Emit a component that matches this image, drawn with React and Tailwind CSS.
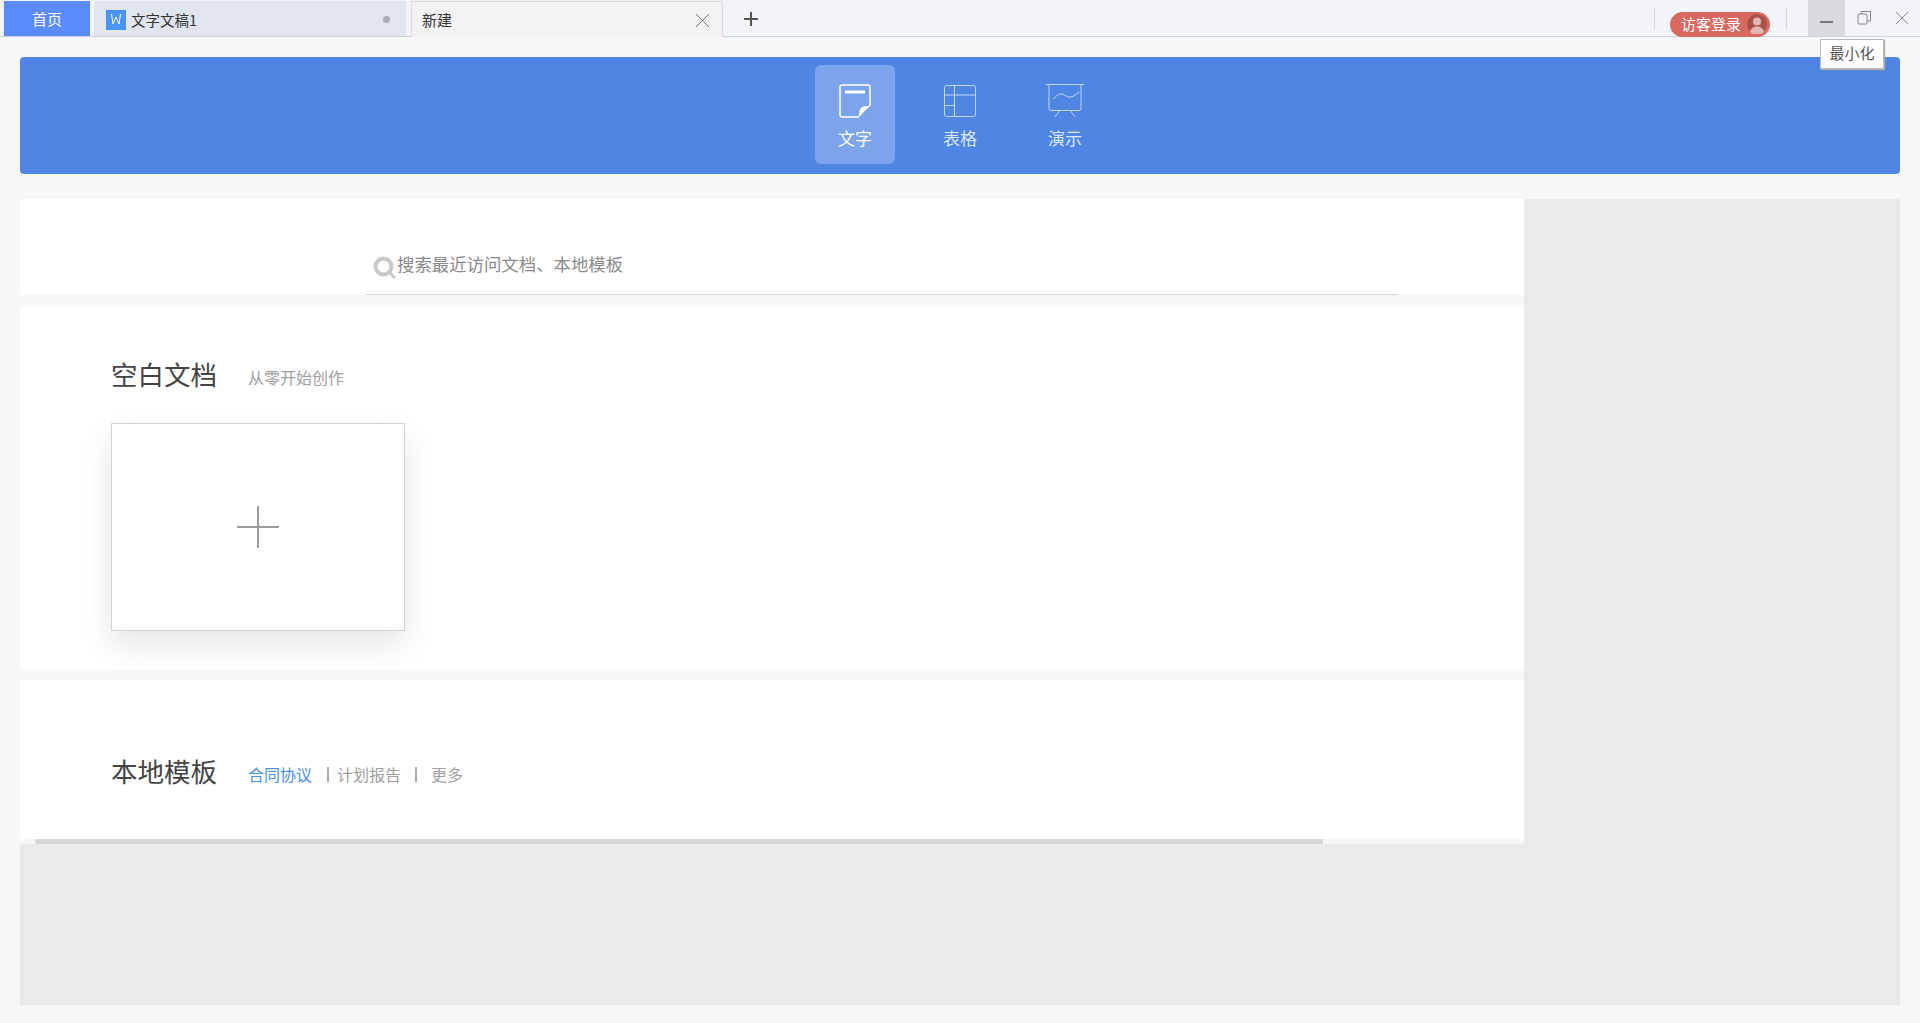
import React from 'react';

const FONT = { fontFamily: '"Noto Sans CJK SC", "Noto Sans", sans-serif' };

const DocIcon = () => (
  <svg width="32" height="34" viewBox="0 0 32 34" fill="none" stroke="#fff" strokeWidth="1.5">
    <path d="M20 33H3a2 2 0 0 1-2-2V3a2 2 0 0 1 2-2h26a2 2 0 0 1 2 2v19" />
    <path d="M6 8h20" strokeWidth="3" />
    <path d="M31 22 20 33c0-4 0-7 2-9s5-2 9-2z" fill="#fff" stroke="none" />
    <path d="M24 30l4-4" stroke="#7ba2ea" />
  </svg>
);

const TableIcon = () => (
  <svg width="34" height="34" viewBox="0 0 34 34" fill="none" stroke="#c4d6f5" strokeWidth="1">
    <rect x="1.5" y="1.5" width="31" height="31" rx="2" />
    <path d="M1.5 11h31M1.500 21.500h10M11.500 1.500v31" />
  </svg>
);

const SlideIcon = () => (
  <svg width="40" height="36" viewBox="0 0 40 36" fill="none" stroke="#c4d6f5" strokeWidth="1">
    <path d="M1 1.500h38M4 1.500v24a2 2 0 0 0 2 2h28a2 2 0 0 0 2-2v-24" />
    <path d="M8 16c3-2 5-6 9-5s5 4 9 3 5-3 8-5" />
    <path d="M14 28c-1 3-3 4-4 6M26 28c1 3 3 4 4 6" />
  </svg>
);

const SearchIcon = () => (
  <svg width="24" height="24" viewBox="0 0 24 24" fill="none" stroke="#c8c8c8">
    <circle cx="10.500" cy="10.500" r="8" strokeWidth="4" />
    <path d="M16 16l6 6" strokeWidth="3" />
  </svg>
);

const WordIcon = () => (
  <div className="flex h-5 w-5 items-center justify-center bg-[#4a94f2]">
    <svg width="12" height="11" viewBox="0 0 12 11" fill="none" stroke="#fff" strokeWidth="1">
      <path d="M1.500 0l1.500 10 3-7 3 7 1.500-10" />
    </svg>
  </div>
);

const Avatar = () => (
  <svg width="20" height="20" viewBox="0 0 20 20">
    <circle cx="10" cy="10" r="10" fill="#a8524a" />
    <circle cx="10" cy="7.500" r="4" fill="#e2b8b2" />
    <path d="M3 18c1-4 4-5.500 7-5.500s6 1.500 7 5.500a10 10 0 0 1-14 0z" fill="#e2b8b2" />
  </svg>
);

const Tool = ({ label, active, children }) => (
  <div className={`flex h-[99px] w-[80px] flex-col items-center rounded-md pt-[18px] ${active ? 'bg-white/25 text-white' : 'text-[#dbe6fa]'}`}>
    <div className="flex h-[36px] items-center justify-center">{children}</div>
    <span className="mt-[7px] text-[17px] leading-[24px]">{label}</span>
  </div>
);

export default function App() {
  return (
    <div style={FONT} className="relative flex h-[1023px] w-full flex-col overflow-hidden bg-[#f7f7f7]">
      {/* Title bar */}
      <div className="flex h-[37px] shrink-0 items-stretch border-b border-[#c9d2e0] bg-[#f3f4f8] pt-px">
        <div className="ml-1 flex w-[86px] items-center justify-center bg-[#5b8cff] pt-[2px] text-[15px] text-white">首页</div>
        <div className="ml-1 flex w-[312px] items-center bg-[#e1e5ee] pl-[12px] pr-[16px] pt-[2px] text-[14.5px] text-[#333]">
          <WordIcon />
          <span className="ml-[5px] flex-1">文字文稿1</span>
          <span className="h-[7px] w-[7px] rounded-full bg-[#a8acb4]" />
        </div>
        <div className="z-10 ml-[5px] -mb-px flex w-[312px] items-center border-x border-t border-[#d5dae4] bg-[#f3f3f4] pl-[10px] pr-[12px] pt-[2px] text-[15px] text-[#333]">
          <span className="flex-1">新建</span>
          <svg width="15" height="15" viewBox="0 0 15 15" stroke="#777" strokeWidth="1" fill="none">
            <path d="M1 1l13 13M14 1L1 14" />
          </svg>
        </div>
        <div className="ml-[20px] flex items-center">
          <svg width="16" height="16" viewBox="0 0 16 16" stroke="#555" strokeWidth="2" fill="none">
            <path d="M8 1v14M1 8h14" />
          </svg>
        </div>
        <div className="ml-auto flex items-stretch">
          <div className="flex items-center">
            <span className="h-[23px] w-px bg-[#d5d8de]" />
            <div className="ml-[15px] mt-[11px] flex h-[25px] w-[100px] items-center justify-between rounded-full bg-[#d9695f] pl-[11px] pr-[3px] text-[15px] text-white">
              <span>访客登录</span>
              <Avatar />
            </div>
            <span className="ml-[16px] h-[23px] w-px bg-[#d5d8de]" />
          </div>
          <div className="ml-[21px] -mt-px flex w-[37px] items-center justify-center bg-[#d8dade] pt-[7px]">
            <span className="h-[2px] w-[13px] bg-[#777]" />
          </div>
          <div className="flex w-[38px] items-center justify-center pb-[3px]">
            <svg width="15" height="15" viewBox="0 0 15 15" fill="none" stroke="#888" strokeWidth="1">
              <rect x="1" y="4" width="9" height="10" rx="1" />
              <path d="M4 4V1.500h9.500V11H10" />
            </svg>
          </div>
          <div className="flex w-[37px] items-center justify-center pb-[1px]">
            <svg width="14" height="14" viewBox="0 0 14 14" fill="none" stroke="#888" strokeWidth="1">
              <path d="M1 1l12 12M13 1L1 13" />
            </svg>
          </div>
        </div>
      </div>

      {/* Tooltip */}
      <div className="absolute left-[1820px] top-[39px] z-20 flex h-[30px] w-[64px] items-center justify-center border border-[#bbb] bg-white pb-[2px] text-[15px] text-[#555] shadow-[1px_1px_1px_#aaa]">
        最小化
      </div>

      <div className="flex flex-1 flex-col px-5 pb-[18px] pt-5">
        {/* Banner */}
        <div className="flex h-[117px] shrink-0 items-start justify-center gap-[25px] rounded bg-[#4f86e3] pt-[8px]">
          <Tool label="文字" active><DocIcon /></Tool>
          <Tool label="表格"><TableIcon /></Tool>
          <Tool label="演示"><SlideIcon /></Tool>
        </div>

        {/* Content area */}
        <div className="mt-[25px] flex-1 bg-[#eaeaea]">
          <div className="flex w-[1504px] flex-col bg-[#f7f7f7]">
            <div className="flex h-[96px] items-end bg-white pl-[345px]">
              <div className="flex h-[60px] w-[1034px] items-center border-b border-[#d9d9d9] pl-[8px] pt-[6px]">
                <SearchIcon />
                <span className="-mt-[7px] text-[17.4px] text-[#8a8a8a]">搜索最近访问文档、本地模板</span>
              </div>
            </div>

            <div className="mt-[11px] h-[364px] bg-white pl-[91px] pt-[48px]">
              <div className="flex h-[40px] items-center">
                <span className="text-[26.5px] leading-[40px] text-[#444]">空白文档</span>
                <span className="ml-[31px] mt-[6px] text-[16px] text-[#a0a0a0]">从零开始创作</span>
              </div>
              <div className="mt-[29px] flex h-[208px] w-[294px] items-center justify-center border border-[#d2d2d2] bg-white pb-px shadow-[0_14px_30px_rgba(0,0,0,0.1)]">
                <svg width="42" height="42" viewBox="0 0 42 42" stroke="#9c9c9c" strokeWidth="2" fill="none">
                  <path d="M21 0v42M0 21h42" />
                </svg>
              </div>
            </div>

            <div className="mt-[10px] h-[159px] bg-white pl-[91px] pt-[71px]">
              <div className="flex h-[40px] items-center">
                <span className="text-[26.5px] leading-[40px] text-[#444]">本地模板</span>
                <div className="ml-[31px] mt-[6px] flex items-center text-[16px] text-[#a0a0a0]">
                  <span className="text-[#4a90e2]">合同协议</span>
                  <span className="ml-[15px] h-[15px] w-[2px] bg-[#a8a8a8]" />
                  <span className="ml-[8px]">计划报告</span>
                  <span className="ml-[14px] h-[15px] w-[2px] bg-[#a8a8a8]" />
                  <span className="ml-[14px]">更多</span>
                </div>
              </div>
            </div>

            {/* Horizontal scrollbar */}
            <div className="h-[5px] pl-[15px]">
              <div className="h-full w-[1288px] rounded-l-sm bg-[#d6d6d6]" />
            </div>
          </div>
        </div>
      </div>
    </div>
  );
}
